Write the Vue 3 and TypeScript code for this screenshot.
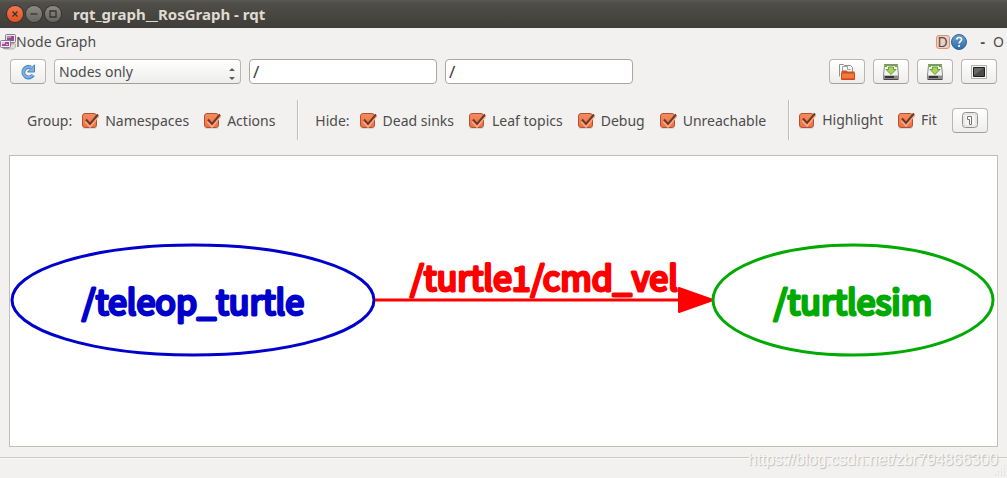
<script setup lang="ts">
import { reactive, ref } from 'vue'

interface Option {
  id: string
  label: string
  checked: boolean
}
interface OptionGroup {
  id: string
  title: string
  options: Option[]
}

const mode = ref('Nodes only')
const nodeFilter = ref('/')
const topicFilter = ref('/')

const groups = reactive<OptionGroup[]>([
  {
    id: 'group',
    title: 'Group:',
    options: [
      { id: 'namespaces', label: 'Namespaces', checked: true },
      { id: 'actions', label: 'Actions', checked: true },
    ],
  },
  {
    id: 'hide',
    title: 'Hide:',
    options: [
      { id: 'dead-sinks', label: 'Dead sinks', checked: true },
      { id: 'leaf-topics', label: 'Leaf topics', checked: true },
      { id: 'debug', label: 'Debug', checked: true },
      { id: 'unreachable', label: 'Unreachable', checked: true },
    ],
  },
  {
    id: 'view',
    title: '',
    options: [
      { id: 'highlight', label: 'Highlight', checked: true },
      { id: 'fit', label: 'Fit', checked: true },
    ],
  },
])
</script>

<template>
  <div class="window">
    <header class="titlebar">
      <button class="ctl close" type="button" aria-label="Close">
        <svg viewBox="0 0 16 16"><path d="M5.5 5.5l5 5M10.5 5.5l-5 5" /></svg>
      </button>
      <button class="ctl" type="button" aria-label="Minimize">
        <svg viewBox="0 0 16 16"><path d="M4.5 8h7" /></svg>
      </button>
      <button class="ctl" type="button" aria-label="Maximize">
        <svg viewBox="0 0 16 16"><path d="M5 5h6v6H5z" /></svg>
      </button>
      <h1 class="title">rqt_graph__RosGraph - rqt</h1>
    </header>

    <div class="dock">
      <svg class="dock-icon" viewBox="0 0 16 16">
        <path d="M7 10.5l2-1.500h5l1.500 1v3l-2 2H5l-2-1z" fill="#dcdad8" stroke="#b4b2b0" />
        <rect x="5.5" y=".5" width="10" height="8" rx="1" fill="#ece4eb" stroke="#8c7a8e" />
        <path d="M7 2h7v5H7z" fill="#8d4f91" />
        <path d="M7 2h4v2H7z" fill="#b98abb" />
        <path d="M8 10h6" stroke="#a09d9f" />
        <rect x=".5" y="6.5" width="10" height="7" rx="1" fill="#f1eaf0" stroke="#8c7a8e" />
        <path d="M2 8h7v4H2z" fill="#a349a4" />
        <path d="M2 8h3v2H2zM6 10h2v1H6z" fill="#dfbfe0" />
        <path d="M3 14.5h6" stroke="#a09d9f" />
      </svg>
      <span class="dock-title">Node Graph</span>
      <button class="flat detach" type="button" aria-label="Reload documentation">D</button>
      <button class="flat help" type="button" aria-label="Help">
        <svg viewBox="0 0 16 16">
          <defs>
            <linearGradient id="helpFill" x1="0" y1="0" x2="0" y2="1">
              <stop offset="0" stop-color="#6d9fce" />
              <stop offset="1" stop-color="#2f6baa" />
            </linearGradient>
          </defs>
          <circle cx="8" cy="8" r="7.5" fill="url(#helpFill)" stroke="#2d639c" />
          <path d="M5.6 5.7C5.8 4.200 6.800 3.500 8.100 3.500c1.400 0 2.500.8 2.500 2.100 0 1.600-2.500 1.900-2.500 4" fill="none" stroke="#fff" stroke-width="1.6" />
          <circle cx="8.1" cy="12" r="1.1" fill="#fff" />
        </svg>
      </button>
      <button class="flat dash" type="button" aria-label="Undock">-</button>
      <button class="flat" type="button" aria-label="Options">O</button>
    </div>

    <div class="toolbar">
      <button class="btn" type="button" aria-label="Refresh">
        <svg viewBox="0 0 16 16">
          <path d="M13 11A5.200 5.200 0 1 1 11 3.600" fill="none" stroke="#4b86be" stroke-width="4" />
          <path d="M14.500.8v7.200H7.500l2.500-2.500z" fill="#7fb0df" stroke="#4b86be" />
          <path d="M12.600 11A5 5 0 1 1 11 3.900" fill="none" stroke="#7fb0df" stroke-width="2.2" />
        </svg>
      </button>
      <div class="combo">
        <select v-model="mode" aria-label="Graph type">
          <option>Nodes only</option>
          <option>Nodes/Topics (active)</option>
          <option>Nodes/Topics (all)</option>
        </select>
        <svg class="arrows" viewBox="0 0 6 12"><path d="M0 3l3-3 3 3zM0 9l3 3 3-3z" fill="#5e5c58" /></svg>
      </div>
      <input v-model="nodeFilter" class="field" type="text" aria-label="Node filter" />
      <input v-model="topicFilter" class="field" type="text" aria-label="Topic filter" />
      <span class="spacer"></span>
      <button class="btn" type="button" aria-label="Load graph">
        <svg viewBox="0 0 16 16">
          <path d="M.5 12.500V.5h4l1 1h6l2 2v8" fill="#f7f7f6" stroke="#93918e" />
          <path d="M3.500 12V2.500h5v3h3" fill="none" stroke="#a3a19e" />
          <path d="M2.500 15V7.500l1-1h4l1 1h7V15z" fill="#d4531f" />
          <path d="M2.500 9h13v6.500h-13z" fill="#f07a45" stroke="#cf4a17" />
          <path d="M3 14.500h12" stroke="#e2551f" />
        </svg>
      </button>
      <button v-for="action in ['Save as DOT', 'Save as SVG']" :key="action" class="btn" type="button" :aria-label="action">
        <svg viewBox="0 0 16 16">
          <path d="M1.500 1.500h13L15.500 11v4.500H.5V11z" fill="#f2f2f0" stroke="#8c8b88" />
          <path d="M1 11.500h14v3.500H1z" fill="#8d8c88" />
          <path d="M2 13h9" stroke="#343432" stroke-width="2" />
          <path d="M1 15.5h14" stroke="#4a4947" />
          <path d="M1 .5h14M1 2.5h3M12 2.5h3" stroke="#6fa83a" />
          <path d="M5.500 3h5v2.500H13l-5 5-5-5h2.500z" fill="#a9d35f" stroke="#6a9f36" />
        </svg>
      </button>
      <button class="btn" type="button" aria-label="Save as image">
        <svg viewBox="0 0 16 16">
          <path d="M.5 1.500h15v13H.5z" fill="#f4f4f3" stroke="#b2b0ad" />
          <path d="M2.500 3.500h11v9h-11z" fill="#4b4b4a" stroke="#1e1e1e" />
          <path d="M3 4h10L3 11z" fill="#686867" />
        </svg>
      </button>
    </div>

    <div class="options">
      <div v-for="group in groups" :key="group.id" class="group" :class="group.id" role="group" :aria-label="group.id">
        <span v-if="group.title" class="group-title">{{ group.title }}</span>
        <label v-for="option in group.options" :key="option.id" class="check">
          <input :id="option.id" v-model="option.checked" type="checkbox" />
          <svg v-if="option.checked" class="tick" viewBox="0 0 18 16">
            <path d="M4 8l4 4.500L16 2.500" fill="none" stroke="#f9a98a" stroke-width="3.500" />
            <path d="M4 6.500l4 4.500L16 1.500" fill="none" stroke="#6f3823" stroke-width="2" />
          </svg>
          <span>{{ option.label }}</span>
        </label>
        <button v-if="group.id === 'view'" class="btn" type="button" aria-label="Zoom to original size">
          <svg viewBox="0 0 16 16">
            <rect x=".5" y=".5" width="15" height="15" rx="3" fill="#f4f4f3" stroke="#8f8e8b" />
            <rect x="2" y="2" width="12" height="12" rx="2" fill="none" stroke="#dad9d6" />
            <path d="M5.500 4.500h4v8h-2v-5h-2z" fill="#fff" stroke="#777673" />
          </svg>
        </button>
      </div>
    </div>

    <main class="canvas">
      <svg class="graph" viewBox="0 0 987 290" role="img" aria-label="Node graph">
        <g class="node blue">
          <ellipse cx="183" cy="144" rx="181" ry="55" />
          <text x="183" y="159">/teleop_turtle</text>
        </g>
        <g class="edge">
          <path d="M365 144H669" />
          <path class="head" d="M669 132L703 144L669 156z" />
          <text x="534" y="135">/turtle1/cmd_vel</text>
        </g>
        <g class="node green">
          <ellipse cx="843" cy="144" rx="140" ry="55" />
          <text x="843" y="159">/turtlesim</text>
        </g>
      </svg>
    </main>

    <footer class="status">
      <span class="watermark">https://blog.csdn.net/zbr794866300</span>
      <svg class="grip" viewBox="0 0 12 12">
        <path d="M10 1h1M7 4h1M10 4h1M4 7h1M7 7h1M10 7h1M1 10h1M4 10h1M7 10h1M10 10h1" stroke="#d0ceca" stroke-width="1" />
      </svg>
    </footer>
  </div>
</template>

<style>
body {
  margin: 0;
}
</style>

<style scoped>
.window {
  display: flex;
  flex-direction: column;
  min-height: 100vh;
  background: #f2f1ef;
  color: #4c4c4c;
  font: 14px/20px "Noto Sans", "Open Sans", sans-serif;
}
.window * {
  box-sizing: border-box;
}
button,
input,
select {
  margin: 0;
  font: inherit;
  color: inherit;
}
svg {
  display: block;
}
.titlebar {
  display: flex;
  align-items: center;
  gap: 3px;
  height: 28px;
  padding: 0 7px;
  background: linear-gradient(#5b5952, #504e48 10%, #3e3d39);
}
.ctl {
  width: 16px;
  height: 16px;
  padding: 0;
  border: 0;
  border-radius: 50%;
  background: linear-gradient(#8d8a82, #66645e);
  box-shadow: 0 0 0 1px #34332f;
}
.ctl path {
  fill: none;
  stroke: #35342f;
  stroke-width: 1.3;
}
.ctl.close {
  background: linear-gradient(#f4764e, #e2521f);
}
.title {
  margin: 0 0 0 9px;
  font-size: 15px;
  line-height: 20px;
  font-weight: 700;
  color: #dfdbd2;
}
.dock {
  display: flex;
  align-items: center;
  height: 27px;
  padding-right: 3px;
}
.dock-icon {
  width: 16px;
  height: 16px;
}
.dock-title {
  margin-right: auto;
}
.flat {
  padding: 0;
  border: 0;
  background: none;
  line-height: 16px;
}
.detach {
  width: 14px;
  height: 14px;
  line-height: 12px;
  border: 1px solid #e58f6d;
  border-radius: 3px;
  background: #efcfc1;
}
.help {
  width: 16px;
  height: 16px;
  margin-left: 1px;
}
.dash {
  margin: 0 8px 0 14px;
  font-weight: 700;
}
.toolbar {
  display: flex;
  align-items: center;
  gap: 8px;
  padding: 4px 10px 0;
}
.btn {
  display: flex;
  align-items: center;
  justify-content: center;
  flex: none;
  width: 36px;
  height: 25px;
  padding: 0;
  border: 1px solid #b9b6b1;
  border-bottom-color: #a3a09b;
  border-radius: 4px;
  background: linear-gradient(#fff, #ededeb);
}
.btn svg {
  width: 16px;
  height: 16px;
}
.combo {
  position: relative;
  flex: 0 1 187px;
}
.combo select {
  display: block;
  width: 100%;
  height: 25px;
  padding: 0 20px 0 4px;
  appearance: none;
  border: 1px solid #b9b6b1;
  border-bottom-color: #a3a09b;
  border-radius: 4px;
  background: linear-gradient(#fff, #ededeb);
}
.arrows {
  position: absolute;
  top: 9px;
  right: 6px;
  width: 6px;
  height: 12px;
  pointer-events: none;
}
.field {
  flex: 0 1 188px;
  min-width: 0;
  height: 25px;
  padding: 0 3px;
  border: 1px solid #aaa7a2;
  border-radius: 4px;
  background: #fff;
  color: #3c3c3c;
  font-size: 17px;
}
.spacer {
  flex: 1;
}
.options {
  display: flex;
  padding: 16px 10px 15px;
}
.group {
  display: flex;
  align-items: center;
  gap: 15px;
  height: 40px;
  padding: 1px 22px 0 17px;
}
.group + .group {
  border-left: 1px solid #bfbdb9;
  box-shadow: inset 1px 0 #fbfbfa;
}
.group.view {
  padding: 0 10px;
}
.group-title {
  margin-right: -5px;
}
.check {
  position: relative;
  display: flex;
  align-items: center;
  gap: 8px;
  white-space: nowrap;
}
.check input {
  width: 15px;
  height: 15px;
  appearance: none;
  border: 1px solid #b0512f;
  border-radius: 3px;
  background: linear-gradient(#f7895f, #ec7346);
  box-shadow: 0 1px #d9d7d4;
}
.check input:not(:checked) {
  background: #fff;
}
.tick {
  position: absolute;
  left: 0;
  top: 2px;
  width: 18px;
  height: 16px;
  pointer-events: none;
}
.canvas {
  display: flex;
  flex: 1;
  margin: 0 9px;
  border: 1px solid #bfbfb8;
  background: #fff;
}
.graph {
  width: 100%;
  height: auto;
}
.graph text {
  font-family: "Noto Sans CJK SC", "Noto Sans", sans-serif;
  font-size: 34px;
  text-anchor: middle;
  stroke-linejoin: round;
}
.graph ellipse,
.graph path,
.graph text {
  stroke-width: 3;
}
.graph .head {
  stroke-width: 2;
  stroke-linejoin: round;
}
.graph ellipse {
  fill: none;
}
.blue ellipse,
.blue text {
  stroke: #0000cc;
}
.blue text {
  fill: #0000cc;
}
.green ellipse,
.green text {
  stroke: #00aa00;
}
.green text {
  fill: #00aa00;
}
.edge {
  fill: #ff0000;
  stroke: #ff0000;
}
.status {
  position: relative;
  height: 21px;
  margin-top: 10px;
  border-top: 1px solid #cbc9c5;
  box-shadow: inset 0 1px #fafaf9;
}
.watermark {
  position: absolute;
  right: 9px;
  top: -10px;
  font: 16px/24px "Liberation Sans", Arial, sans-serif;
  color: #f7f7f6;
  text-shadow: 1px 1px 1px #bcbcbc;
}
.grip {
  position: absolute;
  right: 1px;
  bottom: 1px;
  width: 12px;
  height: 12px;
}
</style>
